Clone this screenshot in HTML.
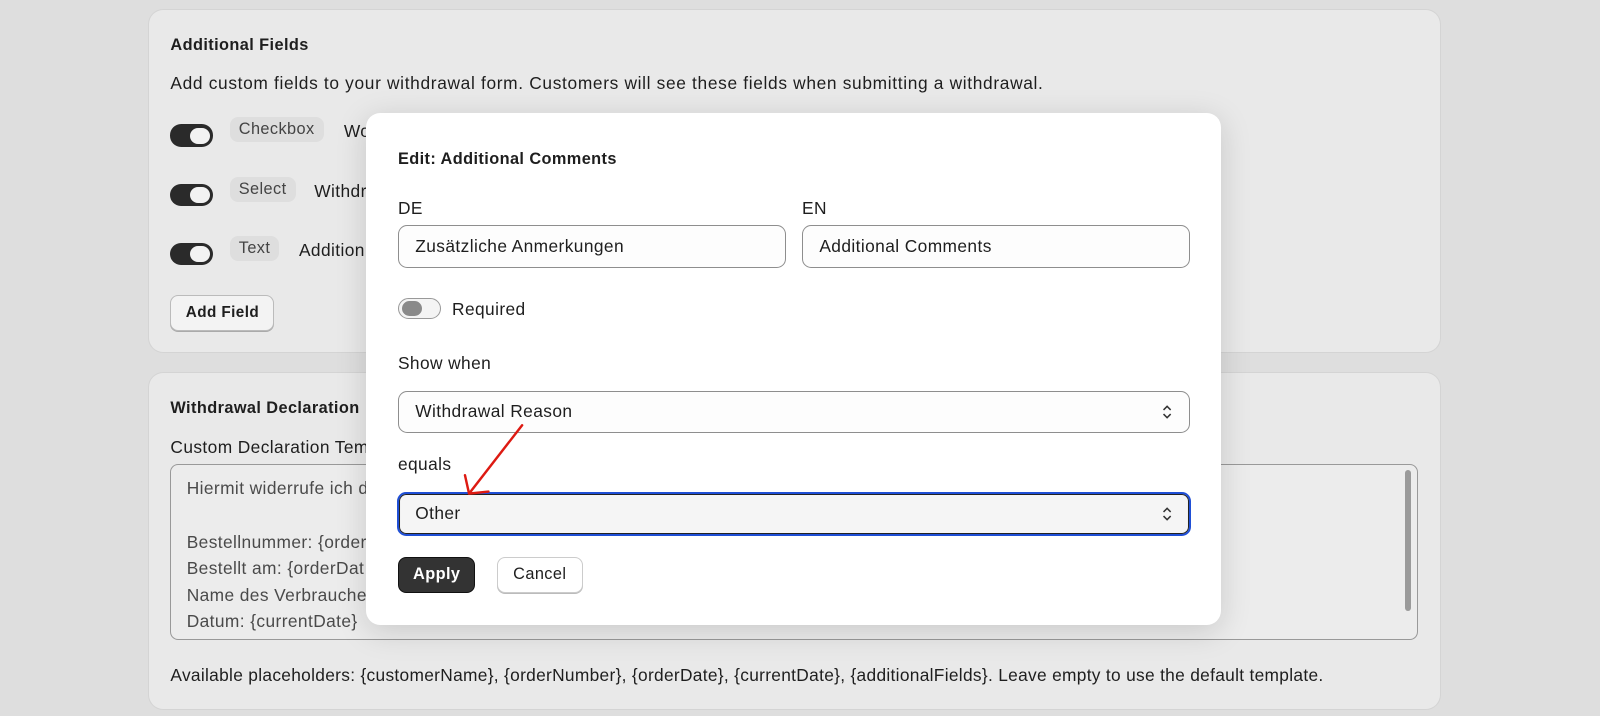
<!DOCTYPE html>
<html><head><style>
*{box-sizing:border-box;margin:0;padding:0}
html,body{width:1600px;height:716px;overflow:hidden;background:#dedede}
#w{zoom:1.0204;width:1568px;height:702px;position:relative;font-family:"Liberation Sans",sans-serif;color:#1e1e1e;font-size:17px;letter-spacing:0.4px}
.card{position:absolute;left:146px;width:1265px;background:#e9e9e9;border-radius:14px;box-shadow:0 0 0 1px #d4d4d4}
.abs{position:absolute;white-space:nowrap}
.tog{position:absolute;width:42px;height:22px;border-radius:11px;background:#2a2a2a}
.tog::after{content:"";position:absolute;right:3px;top:3px;width:20px;height:16px;border-radius:8px;background:#f2f2f2}
.tag{position:absolute;background:#dedede;border-radius:8px;padding:3px 9px;font-size:16px;color:#444}
.modal{position:absolute;left:359px;top:111px;width:838px;height:502px;background:#fff;border-radius:14px;box-shadow:0 6px 30px rgba(0,0,0,.15)}
.inp{position:absolute;border:1px solid #8e8e8e;border-radius:9px;background:#fdfdfd;font-size:17px;padding-left:16px;display:flex;align-items:center}
.chev{position:absolute;right:16px;top:50%;transform:translateY(-50%)}
</style></head><body><div id="w">
<div class="card" style="top:10px;height:335px">
  <div class="abs" style="left:21px;top:25px;font-weight:bold;font-size:16px">Additional Fields</div>
  <div class="abs" style="left:21px;top:62px;letter-spacing:0.65px">Add custom fields to your withdrawal form. Customers will see these fields when submitting a withdrawal.</div>
  <div class="tog" style="left:21px;top:112px"></div><div class="tag" style="left:79px;top:105px">Checkbox</div><div class="abs" style="left:191px;top:109px">Wo</div>
  <div class="tog" style="left:21px;top:170px"></div><div class="tag" style="left:79px;top:163px">Select</div><div class="abs" style="left:162px;top:167px">Withdr</div>
  <div class="tog" style="left:21px;top:228px"></div><div class="tag" style="left:79px;top:221px">Text</div><div class="abs" style="left:147px;top:225px">Addition</div>
  <div class="abs" style="left:21px;top:279px;width:102px;height:35px;border:1px solid #bbb;border-radius:8px;background:#f3f3f3;box-shadow:0 1px 0 #aaa;font-size:15px;font-weight:bold;display:flex;align-items:center;justify-content:center">Add Field</div>
</div>
<div class="card" style="top:366px;height:329px">
  <div class="abs" style="left:21px;top:25px;font-weight:bold;font-size:16px">Withdrawal Declaration</div>
  <div class="abs" style="left:21px;top:62px">Custom Declaration Tem</div>
  <div class="abs" style="left:21px;top:89px;width:1223px;height:172px;border:1px solid #999;border-radius:8px;background:#ececec;overflow:hidden;padding:10px 15px;line-height:26px;color:#4a4a4a;white-space:pre">Hiermit widerrufe ich d

Bestellnummer: {order
Bestellt am: {orderDat
Name des Verbrauche
Datum: {currentDate}
{additionalFields}</div>
  <div class="abs" style="left:1231px;top:95px;width:6px;height:138px;border-radius:3px;background:#9a9a9a"></div>
  <div class="abs" style="left:21px;top:286px;letter-spacing:0.3px">Available placeholders: {customerName}, {orderNumber}, {orderDate}, {currentDate}, {additionalFields}. Leave empty to use the default template.</div>
</div>
<div class="modal">
  <div class="abs" style="left:31px;top:36px;font-weight:bold;font-size:16px">Edit: Additional Comments</div>
  <div class="abs" style="left:31px;top:83px">DE</div>
  <div class="abs" style="left:427px;top:83px">EN</div>
  <div class="inp" style="left:31px;top:110px;width:380px;height:42px">Zusätzliche Anmerkungen</div>
  <div class="inp" style="left:427px;top:110px;width:380px;height:42px">Additional Comments</div>
  <div class="abs" style="left:31px;top:181px;width:42px;height:21px;border-radius:11px;border:1px solid #999;background:#f4f4f4"><div style="position:absolute;left:3px;top:2px;width:20px;height:15px;border-radius:8px;background:#8a8a8a"></div></div>
  <div class="abs" style="left:84px;top:182px">Required</div>
  <div class="abs" style="left:31px;top:235px">Show when</div>
  <div class="inp" style="left:31px;top:272px;width:776px;height:41px">Withdrawal Reason<svg class="chev" width="10" height="16" viewBox="0 0 10 16"><path d="M1.5 6 5 2.5 8.5 6M1.5 10 5 13.5 8.5 10" fill="none" stroke="#333" stroke-width="1.5"/></svg></div>
  <div class="abs" style="left:31px;top:334px">equals</div>
  <div class="inp" style="left:30px;top:371px;width:778px;height:43px;border:2px solid #1f4fd6;box-shadow:inset 0 0 0 1px #222;background:#f5f5f5;padding-left:16px">Other<svg class="chev" width="10" height="16" viewBox="0 0 10 16"><path d="M1.5 6 5 2.5 8.5 6M1.5 10 5 13.5 8.5 10" fill="none" stroke="#333" stroke-width="1.5"/></svg></div>
  <div class="abs" style="left:31px;top:435px;width:76px;height:35px;border-radius:8px;background:#333;border:1px solid #111;color:#fff;font-weight:bold;font-size:16px;display:flex;align-items:center;justify-content:center">Apply</div>
  <div class="abs" style="left:128px;top:435px;width:84px;height:35px;border-radius:8px;background:#fff;border:1px solid #ccc;box-shadow:0 1px 0 #bbb;font-size:16px;display:flex;align-items:center;justify-content:center">Cancel</div>
  <svg class="abs" style="left:0;top:0" width="838" height="502"><path d="M153 306 L101 373 M97 355 L101 373 L120 371" fill="none" stroke="#dd1a12" stroke-width="2.4" stroke-linecap="round" stroke-linejoin="round"/></svg>
</div>
</div></body></html>
